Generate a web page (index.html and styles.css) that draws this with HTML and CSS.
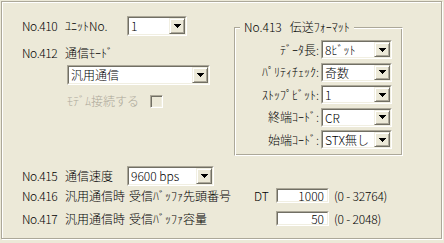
FILE: index.html
```html
<!DOCTYPE html>
<html lang="ja">
  <head>
    <meta charset="UTF-8" />
    <title>通信設定</title>
    <link rel="stylesheet" href="styles.css">
  </head>
  <body>
    <div class="panel">
      <div class="top">
        <div class="left">
          <div class="row row-410">
            <span class="no">No.410</span>
            <span class="name name-unit">ﾕﾆｯﾄNo.</span>
            <div class="combo combo-unit">
              <div class="combo-field">
                <span class="combo-text">1</span>
                <span class="combo-btn"><svg width="7" height="4" viewBox="0 0 7 4"><path d="M0 0h7v1H0zM1 1h5v1H1zM2 2h3v1H2zM3 3h1v1H3z" fill="#000"/></svg></span>
              </div>
            </div>
          </div>
          <div class="row row-412">
            <span class="no">No.412</span>
            <span class="name">通信ﾓｰﾄﾞ</span>
          </div>
          <div class="row row-mode">
            <div class="combo combo-mode">
              <div class="combo-field">
                <span class="combo-text">汎用通信</span>
                <span class="combo-btn"><svg width="7" height="4" viewBox="0 0 7 4"><path d="M0 0h7v1H0zM1 1h5v1H1zM2 2h3v1H2zM3 3h1v1H3z" fill="#000"/></svg></span>
              </div>
            </div>
          </div>
          <div class="row row-modem">
            <span class="disabled">ﾓﾃﾞﾑ接続する</span>
            <span class="check"></span>
          </div>
        </div>

        <fieldset class="group">
          <legend>No.413<span class="gap"></span>伝送ﾌｫｰﾏｯﾄ</legend>
          <div class="group-grid">
            <span class="glabel">ﾃﾞｰﾀ長：</span>
            <div class="combo">
              <div class="combo-field">
                <span class="combo-text">8ﾋﾞｯﾄ</span>
                <span class="combo-btn"><svg width="7" height="4" viewBox="0 0 7 4"><path d="M0 0h7v1H0zM1 1h5v1H1zM2 2h3v1H2zM3 3h1v1H3z" fill="#000"/></svg></span>
              </div>
            </div>
            <span class="glabel">ﾊﾟﾘﾃｨﾁｪｯｸ：</span>
            <div class="combo">
              <div class="combo-field">
                <span class="combo-text">奇数</span>
                <span class="combo-btn"><svg width="7" height="4" viewBox="0 0 7 4"><path d="M0 0h7v1H0zM1 1h5v1H1zM2 2h3v1H2zM3 3h1v1H3z" fill="#000"/></svg></span>
              </div>
            </div>
            <span class="glabel">ｽﾄｯﾌﾟﾋﾞｯﾄ：</span>
            <div class="combo">
              <div class="combo-field">
                <span class="combo-text">1</span>
                <span class="combo-btn"><svg width="7" height="4" viewBox="0 0 7 4"><path d="M0 0h7v1H0zM1 1h5v1H1zM2 2h3v1H2zM3 3h1v1H3z" fill="#000"/></svg></span>
              </div>
            </div>
            <span class="glabel">終端ｺｰﾄﾞ：</span>
            <div class="combo">
              <div class="combo-field">
                <span class="combo-text">CR</span>
                <span class="combo-btn"><svg width="7" height="4" viewBox="0 0 7 4"><path d="M0 0h7v1H0zM1 1h5v1H1zM2 2h3v1H2zM3 3h1v1H3z" fill="#000"/></svg></span>
              </div>
            </div>
            <span class="glabel">始端ｺｰﾄﾞ：</span>
            <div class="combo">
              <div class="combo-field">
                <span class="combo-text">STX無し</span>
                <span class="combo-btn"><svg width="7" height="4" viewBox="0 0 7 4"><path d="M0 0h7v1H0zM1 1h5v1H1zM2 2h3v1H2zM3 3h1v1H3z" fill="#000"/></svg></span>
              </div>
            </div>
          </div>
        </fieldset>
      </div>

      <div class="bottom">
        <div class="row row-415">
          <span class="no">No.415</span>
          <span class="name name-speed">通信速度</span>
          <div class="combo combo-speed">
            <div class="combo-field">
              <span class="combo-text">9600 bps</span>
              <span class="combo-btn"><svg width="7" height="4" viewBox="0 0 7 4"><path d="M0 0h7v1H0zM1 1h5v1H1zM2 2h3v1H2zM3 3h1v1H3z" fill="#000"/></svg></span>
            </div>
          </div>
        </div>
        <div class="row row-416">
          <span class="no">No.416</span>
          <span class="name name-head">汎用通信時<span class="sp"></span>受信ﾊﾞｯﾌｧ先頭番号</span>
          <span class="dt">DT</span>
          <div class="edit"><div class="edit-field">1000</div></div>
          <span class="range">(0 - 32764)</span>
        </div>
        <div class="row row-417">
          <span class="no">No.417</span>
          <span class="name name-size">汎用通信時<span class="sp"></span>受信ﾊﾞｯﾌｧ容量</span>
          <div class="edit"><div class="edit-field">50</div></div>
          <span class="range">(0 - 2048)</span>
        </div>
      </div>
    </div>
  </body>
</html>
```

FILE: styles.css
```css
body {
  margin: 0;
  background-color: #ece9d8;
  font-family: "Noto Sans CJK JP", sans-serif;
  font-size: 12px;
  font-weight: 300;
  line-height: 14px;
  color: #000;
  font-feature-settings: "pwid";
}
.panel {
  box-sizing: border-box;
  margin: 1px;
  width: 441px;
  height: 238px;
  border: 1px solid #aca899;
  box-shadow: inset 1px 1px #fff, 1px 1px #fff;
}
.top {
  display: flex;
  align-items: flex-start;
  padding: 14px 0 0 20px;
}
.left {
  width: 212px;
}
.row {
  display: flex;
  align-items: center;
}
.no {
  width: 43px;
  flex-shrink: 0;
  letter-spacing: -0.4px;
}
.name-unit {
  width: 62px;
}
.row-412 {
  margin-top: 10px;
}
.row-mode {
  margin-top: 5px;
  padding-left: 45px;
}
.row-modem {
  margin-top: 9px;
  padding-left: 45px;
  height: 14px;
}
.disabled {
  color: #aca899;
  width: 83px;
}
.check {
  box-sizing: border-box;
  width: 13px;
  height: 13px;
  border: 1px solid;
  border-color: #aca899 #fff #fff #aca899;
  box-shadow: inset 1px 1px #716f64, inset -1px -1px #f1efe2;
}

/* combo box */
.combo {
  box-sizing: border-box;
  height: 19px;
  border: 1px solid;
  border-color: #aca899 #fff #fff #aca899;
}
.combo-field {
  display: flex;
  height: 100%;
  box-sizing: border-box;
  border: 1px solid;
  border-color: #716f64 #f1efe2 #f1efe2 #716f64;
  background-color: #fff;
}
.combo-text {
  flex: 1;
  padding-left: 2px;
  line-height: 15px;
  white-space: nowrap;
  overflow: hidden;
}
.combo-btn {
  box-sizing: border-box;
  width: 16px;
  display: flex;
  align-items: center;
  justify-content: center;
  background-color: #ece9d8;
  border: 1px solid;
  border-color: #f1efe2 #716f64 #716f64 #f1efe2;
  box-shadow: inset 1px 1px #fff, inset -1px -1px #aca899;
}
.combo-btn svg {
  display: block;
}
.combo-unit {
  width: 60px;
  height: 20px;
}
.combo-mode {
  width: 143px;
  height: 20px;
}
.combo-speed {
  width: 87px;
  height: 20px;
}

/* group box */
.group {
  box-sizing: border-box;
  width: 169px;
  margin: 5px 0 0 0;
  padding: 7px 0 6px 0;
  border: 1px solid;
  border-color: #aca899 #fff #fff #aca899;
  box-shadow: inset 1px 1px #fff, inset -1px -1px #aca899;
  min-inline-size: 0;
}
.group legend {
  margin-left: 5px;
  padding: 0 4px;
  line-height: 12px;
  background-color: #ece9d8;
}
.gap {
  display: inline-block;
  width: 8px;
}
.group-grid {
  display: grid;
  grid-template-columns: 84px 71px;
  column-gap: 2px;
  row-gap: 3.5px;
  align-items: center;
}
.glabel {
  text-align: right;
  white-space: nowrap;
}

/* bottom rows */
.bottom {
  padding-left: 20px;
  margin-top: 10px;
}
.name-speed {
  width: 62px;
}
.row-416 {
  margin-top: 2px;
  height: 15px;
}
.row-417 {
  margin-top: 8px;
  height: 15px;
}
.sp {
  display: inline-block;
  width: 4px;
}
.name-head {
  width: 189px;
  white-space: nowrap;
}
.name-size {
  width: 211px;
  white-space: nowrap;
}
.dt {
  width: 22px;
}
.edit {
  box-sizing: border-box;
  width: 53px;
  height: 15px;
  border: 1px solid;
  border-color: #aca899 #fff #fff #aca899;
}
.edit-field {
  box-sizing: border-box;
  height: 100%;
  border: 1px solid;
  border-color: #716f64 #f1efe2 #f1efe2 #716f64;
  background-color: #fff;
  text-align: right;
  padding-right: 3px;
  line-height: 11px;
}
.range {
  margin-left: 5px;
  letter-spacing: -0.2px;
}
```
